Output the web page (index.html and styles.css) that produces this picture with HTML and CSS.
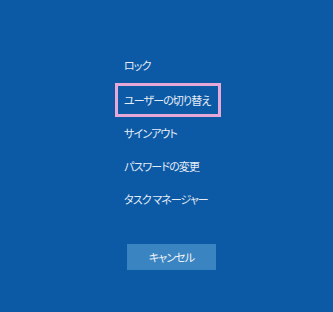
FILE: index.html
```html
<!DOCTYPE html>
<html lang="ja">
<head>
<meta charset="utf-8">
<link rel="stylesheet" href="styles.css">
</head>
<body>
<div class="screen">
  <ul class="menu">
    <li class="item first">ロック</li>
    <li class="item selected">ユーザーの切り替え</li>
    <li class="item">サインアウト</li>
    <li class="item">パスワードの変更</li>
    <li class="item">タスク マネージャー</li>
  </ul>
  <div class="actions">
    <button class="cancel">キャンセル</button>
  </div>
</div>
</body>
</html>
```
FILE: styles.css
```css
html, body {
  margin: 0;
  padding: 0;
}
body {
  background: #0c5aa6;
  font-family: "Noto Sans CJK JP", "Noto Sans", sans-serif;
  font-feature-settings: "palt";
}
.screen {
  width: 333px;
  height: 312px;
  padding: 48px 0 0 115px;
  box-sizing: border-box;
}
.menu {
  list-style: none;
  margin: 0;
  padding: 0;
  width: 106px;
}
.item {
  box-sizing: border-box;
  height: 33px;
  border: 3px solid transparent;
  padding-left: 6px;
  display: flex;
  align-items: center;
  color: #e6ecf5;
  font-size: 11px;
  letter-spacing: -0.9px;
  white-space: nowrap;
}
.item.first {
  margin-bottom: 2px;
}
.item.selected {
  border-color: #e6a8d7;
  height: 34px;
  margin-bottom: -1px;
}
.actions {
  padding: 28px 0 0 12px;
}
.cancel {
  width: 89px;
  height: 26px;
  border: none;
  background: #3a84c2;
  color: #f0f4f9;
  font-family: inherit;
  font-size: 11px;
  letter-spacing: -0.9px;
  font-feature-settings: "palt";
  padding: 0;
}
```
